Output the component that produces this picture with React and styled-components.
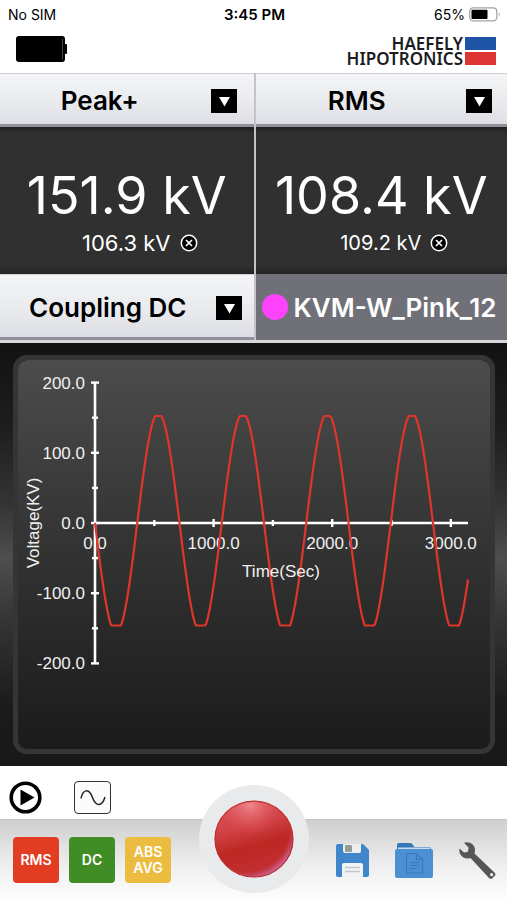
import React from "react";
import styled, { createGlobalStyle } from "styled-components";

const GlobalStyle = createGlobalStyle`
  * {
    box-sizing: border-box;
  }
  body {
    margin: 0;
    background: #fff;
    color: #000;
    font-family: Inter, "Liberation Sans", sans-serif;
  }
  button, select {
    font: inherit;
    color: inherit;
    margin: 0;
    padding: 0;
    border: 0;
    background: none;
    cursor: pointer;
  }
  svg {
    display: block;
  }
`;

const Screen = styled.div`
  display: flex;
  flex-direction: column;
  min-height: 100vh;
`;

const StatusBar = styled.div`
  display: grid;
  grid-template-columns: 1fr auto 1fr;
  align-items: center;
  height: 28px;
  padding: 0 6px 0 8px;
  font-size: 14px;
`;

const Clock = styled.strong`
  font-size: 15px;
  font-weight: 600;
`;

const Power = styled.span`
  display: flex;
  align-items: center;
  justify-content: flex-end;
  gap: 4px;
`;

const Header = styled.header`
  display: flex;
  justify-content: space-between;
  align-items: center;
  height: 45px;
  padding: 0 11px 3px 16px;
`;

const Brand = styled.div`
  display: flex;
  align-items: center;
  gap: 2px;
  padding-top: 4px;
  font-family: "Noto Sans", sans-serif;
  font-size: 17px;
  font-weight: 600;
  line-height: 15px;
  text-align: right;
  color: #1c1c1e;
`;

const Flag = styled.div`
  display: grid;
  gap: 2px;
  width: 31px;

  &::before, &::after {
    content: "";
    height: 13px;
    background: #1f53a5;
  }
  &::after {
    background: #dc3533;
  }
`;

const Columns = styled.div`
  display: grid;
  grid-template-columns: 1fr 1fr;
  border-bottom: 3px solid #d8d8dc;
  background: #707078;
`;

const Column = styled.section`
  display: flex;
  flex-direction: column;
  min-width: 0;

  & + & {
    border-left: 2px solid #c4c4c8;
  }
`;

const Picker = styled.label`
  display: flex;
  align-items: center;
  gap: ${props => props.$gap || 0}px;
  height: ${props => props.$height}px;
  padding-top: 1px;
  padding-right: ${props => props.$end}px;
  background: linear-gradient(#f3f5f6, #e9eaed 55%, #dcdde3);
  box-shadow: inset 0 1px #cfd0d3, inset 0 -3px #8f909b;
`;

const Select = styled.select`
  flex: 1;
  min-width: 0;
  height: 100%;
  appearance: none;
  font-size: 26px;
  font-weight: 600;
  text-align: center;
  text-align-last: center;
`;

const Reading = styled.div`
  display: flex;
  flex-direction: column;
  align-items: center;
  height: 147px;
  padding-top: 36px;
  background: linear-gradient(#1e1e22, #303030 6px, #303030 138px, #242424);
  color: #fff;
`;

const Value = styled.div`
  font-size: 52px;
  font-weight: 400;
  line-height: 66px;
  white-space: nowrap;
`;

const Held = styled.div`
  display: flex;
  align-items: center;
  gap: 9px;
  padding-left: 26px;
  font-size: ${props => props.$size}px;
  line-height: 28px;
`;

const Device = styled.div`
  display: flex;
  align-items: center;
  gap: 6px;
  height: 66px;
  padding-left: 6px;
  background: #707178;
  color: #fff;
  font-size: 26px;
  font-weight: 600;
  white-space: nowrap;
`;

const Dot = styled.span`
  flex: none;
  width: 26px;
  height: 26px;
  border-radius: 50%;
  background: #ff42fb;
`;

const Stage = styled.main`
  flex: 1;
  display: flex;
  padding: 12px 12px 12px 13px;
  background: linear-gradient(#121212, #1e1e1e 20%, #343434 38%, #4e4e4e 51%, #343434 66%, #1b1b1b 86%, #181818);
`;

const Panel = styled.div`
  flex: 1;
  min-width: 0;
  border: 5px solid #353535;
  border-radius: 14px;
  background: linear-gradient(#4c4c4c, #363636 42%, #1b1b1b) padding-box;
`;

const Tools = styled.div`
  display: flex;
  align-items: center;
  gap: 32px;
  height: 53px;
  padding: 10px 9px 0;
`;

const WaveButton = styled.button`
  display: grid;
  place-items: center;
  width: 37px;
  height: 33px;
  border: 1px solid #333;
  border-radius: 4px;
  background: #fbfbfb;
`;

const Footer = styled.footer`
  display: grid;
  grid-template-columns: 1fr auto 1fr;
  height: 81px;
  border-top: 1px solid #c6c6c6;
  background: linear-gradient(#cfcfcf, #f0f0f0 60%, #fdfdfd);
`;

const Modes = styled.div`
  display: flex;
  align-items: center;
  gap: 10px;
  padding-left: 13px;
`;

const Mode = styled.button`
  width: 46px;
  height: 46px;
  border-radius: 4px;
  background: ${props => props.$color};
  color: #fff;
  font-size: 14px;
  font-weight: 600;
  line-height: 16px;
`;

const Record = styled.button`
  display: grid;
  place-items: center;
  width: 110px;
  height: 108px;
  margin-top: -35px;
  border-radius: 50%;
  background: #e9eaec;
`;

const Actions = styled.div`
  display: flex;
  align-items: center;
  justify-content: flex-end;
  gap: 26px;
  padding-right: 11px;
`;

// plot geometry, in viewBox units
const X0 = 77;
const Y0 = 163;
const X_SCALE = 118.6 / 1000;
const Y_SCALE = 70.2 / 100;
const PLOT_END = 450;
const PERIOD = 84.5;

const wave = [];
for (let x = X0; x <= PLOT_END; x += 1) {
  const y = 110 * Math.sin(((x - X0) / PERIOD) * 2 * Math.PI);
  wave.push(`${x},${(Y0 + Math.max(-107, Math.min(102.5, y))).toFixed(1)}`);
}

const yTicks = [200, 150, 100, 50, 0, -50, -100, -150, -200];
const xTicks = [500, 1000, 1500, 2000, 2500, 3000];

function Chart() {
  return (
    <svg viewBox="0 0 472 389" width="100%" fontFamily="'Liberation Sans', Arial, sans-serif" fontSize="17" fill="#f0f0f0" role="img" aria-label="Voltage over time">
      <g stroke="#fff" strokeWidth="2.600">
        <path d={`M${X0} ${Y0 - 200 * Y_SCALE}V${Y0 + 200 * Y_SCALE}M${X0} ${Y0}H${PLOT_END}`} />
        {yTicks.map(v => {
          const r = v % 100 === 0 ? 4 : 3;
          return <path key={v} strokeWidth="2.4" d={`M${X0 - r} ${Y0 - v * Y_SCALE}h${r * 2}`} />;
        })}
        {xTicks.map(v => {
          const r = v % 1000 === 0 ? 4 : 3;
          return <path key={v} strokeWidth="2.4" d={`M${X0 + v * X_SCALE} ${Y0 - r}v${r * 2}`} />;
        })}
      </g>
      {yTicks.filter(v => v % 100 === 0).map(v => (
        <text key={v} x="67" y={Y0 + 6 - v * Y_SCALE} textAnchor="end">{v.toFixed(1)}</text>
      ))}
      {[0, 1000, 2000, 3000].map(v => (
        <text key={v} x={X0 + v * X_SCALE} y={Y0 + 26} textAnchor="middle">{v.toFixed(1)}</text>
      ))}
      <polyline points={wave.join(" ")} fill="none" stroke="#e0352b" strokeWidth="2.200" />
      <text x="263" y="217" textAnchor="middle">Time(Sec)</text>
      <text transform="translate(21 163) rotate(-90)" textAnchor="middle">Voltage(KV)</text>
    </svg>
  );
}

const Arrow = () => (
  <svg width="26" height="24" viewBox="0 0 26 24" aria-hidden="true">
    <rect width="26" height="24" />
    <path d="M8 8h11l-5.500 9.500z" fill="#fff" />
  </svg>
);

function Dropdown({ label, value, height, gap, end }) {
  return (
    <Picker $height={height} $gap={gap} $end={end}>
      <Select aria-label={label} defaultValue={value}>
        <option>{value}</option>
      </Select>
      <Arrow />
    </Picker>
  );
}

function Measurement({ value, held, heldSize }) {
  return (
    <Reading>
      <Value>{value}</Value>
      <Held $size={heldSize}>
        {held}
        <button aria-label="Clear held value">
          <svg width="18" height="18" viewBox="0 0 18 18" stroke="#fff" fill="#000">
            <circle cx="9" cy="9" r="7.700" strokeWidth="1.500" />
            <path d="M6 6l6 6M12 6l-6 6" strokeWidth="1.700" />
          </svg>
        </button>
      </Held>
    </Reading>
  );
}

function App() {
  return (
    <Screen>
      <GlobalStyle />
      <StatusBar>
        <span>No SIM</span>
        <Clock>3:45 PM</Clock>
        <Power>
          65%
          <svg width="32" height="15" viewBox="0 0 32 15" aria-hidden="true">
            <rect x=".8" y=".8" width="27" height="13" rx="3.500" fill="#fff" stroke="#a4a4a4" strokeWidth="1.300" />
            <rect x="2.500" y="2.700" width="16" height="9.300" rx="1" />
            <path d="M29.800 5.200q2 2.200 0 4.400z" fill="#a4a4a4" />
          </svg>
        </Power>
      </StatusBar>

      <Header>
        <svg width="51" height="26" viewBox="0 0 51 26" role="img" aria-label="Meter battery">
          <rect width="49" height="26" rx="3" />
          <rect x="47" y="8" width="4" height="10" rx="1" />
          <path d="M46.500 2.500v21" stroke="#555" strokeWidth=".8" />
        </svg>
        <Brand>
          <div>HAEFELY<br />HIPOTRONICS</div>
          <Flag />
        </Brand>
      </Header>

      <Columns>
        <Column>
          <Dropdown label="Left measurement" value="Peak+" height={54} gap={11} end={17} />
          <Measurement value="151.9 kV" held="106.3 kV" heldSize={22} />
          <Dropdown label="Coupling" value="Coupling DC" height={66} end={12} />
        </Column>
        <Column>
          <Dropdown label="Right measurement" value="RMS" height={54} gap={8} end={15} />
          <Measurement value="108.4 kV" held="109.2 kV" heldSize={20} />
          <Device><Dot />KVM-W_Pink_12</Device>
        </Column>
      </Columns>

      <Stage>
        <Panel>
          <Chart />
        </Panel>
      </Stage>

      <Tools>
        <button aria-label="Play">
          <svg width="33" height="33" viewBox="0 0 33 33">
            <circle cx="16.500" cy="16.500" r="14.300" fill="#fff" stroke="#000" strokeWidth="3.600" />
            <path d="M11.500 8.500v16l14-8z" />
          </svg>
        </button>
        <WaveButton aria-label="Waveform">
          <svg width="26" height="18" viewBox="0 0 26 18" fill="none" stroke="#222" strokeWidth="1.500">
            <path d="M1 9.500C3 0 9 -1 12.500 8.500S22 18 25 8" />
          </svg>
        </WaveButton>
      </Tools>

      <Footer>
        <Modes>
          <Mode $color="#e23d22">RMS</Mode>
          <Mode $color="#418d25">DC</Mode>
          <Mode $color="#ebbc40">ABS<br />AVG</Mode>
        </Modes>
        <Record aria-label="Record">
          <svg width="80" height="78" viewBox="0 0 80 78">
            <defs>
              <linearGradient id="ball" x1=".3" y1="0" x2=".6" y2="1">
                <stop offset="0" stopColor="#dd555b" />
                <stop offset=".35" stopColor="#d03f43" />
                <stop offset=".6" stopColor="#bd2823" />
                <stop offset="1" stopColor="#c43035" />
              </linearGradient>
              <radialGradient id="shine" cx=".45" cy=".04" r=".42">
                <stop offset="0" stopColor="#f08d92" stopOpacity=".9" />
                <stop offset="1" stopColor="#e0555a" stopOpacity="0" />
              </radialGradient>
              <radialGradient id="glow" cx=".38" cy=".36" r=".7">
                <stop offset=".82" stopColor="#c95a9a" stopOpacity="0" />
                <stop offset="1" stopColor="#d584cc" stopOpacity=".9" />
              </radialGradient>
            </defs>
            <ellipse cx="40" cy="39" rx="39" ry="38" fill="url(#ball)" />
            <ellipse cx="40" cy="39" rx="38" ry="37" fill="url(#shine)" />
            <ellipse cx="40" cy="39" rx="39" ry="38" fill="url(#glow)" stroke="#b92b2b" strokeWidth="1.200" />
          </svg>
        </Record>
        <Actions>
          <button aria-label="Save">
            <svg width="33" height="33" viewBox="0 0 33 33">
              <path d="M2 0h25l6 6v25q0 2-2 2H2q-2 0-2-2V2q0-2 2-2z" fill="#3f86cb" />
              <path d="M7 0h18v7q0 2-2 2H9q-2 0-2-2z" fill="#ecefed" />
              <rect x="9" y="1" width="7" height="7" rx="1" fill="#949c98" />
              <path d="M6 33V21q0-2 2-2h17q2 0 2 2v12z" fill="#f1f3f5" />
              <path d="M9 23.500h15M9 27.500h15" stroke="#c3c8cc" strokeWidth="1.500" />
            </svg>
          </button>
          <button aria-label="Files">
            <svg width="38" height="35" viewBox="0 0 38 35">
              <path d="M2 12V2q0-2 2-2h11q2 0 3 2l1.500 2H34q2 0 2 2v6z" fill="#3478b8" />
              <path d="M3 4.500h32v4H3z" fill="#c4dcee" />
              <path d="M2 6h34q2 0 2 2v25q0 2-2 2H2q-2 0-2-2V8q0-2 2-2z" fill="#4a90d3" />
              <g fill="none" stroke="#3a7abb" strokeWidth="1.100">
                <path d="M11.500 10.500h10l6 6V30h-16zM21.500 10.500v6h6" />
                <path d="M15 19.500h9M15 22.500h9M15 25.500h6" />
              </g>
            </svg>
          </button>
          <button aria-label="Settings">
            <svg width="37" height="37" viewBox="0 0 37 37" fill="#555657">
              <path d="M5 .8C10-1 16 2 16 8l-.5 3.500L36 31l.5 2-4 4-2-.5L11.500 16C7 18 1 15 .3 9L.5 6.500l4.500 4 3.800-.8.9-4z" />
              <circle cx="32.600" cy="32.600" r="1.600" fill="#f4f4f4" />
            </svg>
          </button>
        </Actions>
      </Footer>
    </Screen>
  );
}

export default App;
